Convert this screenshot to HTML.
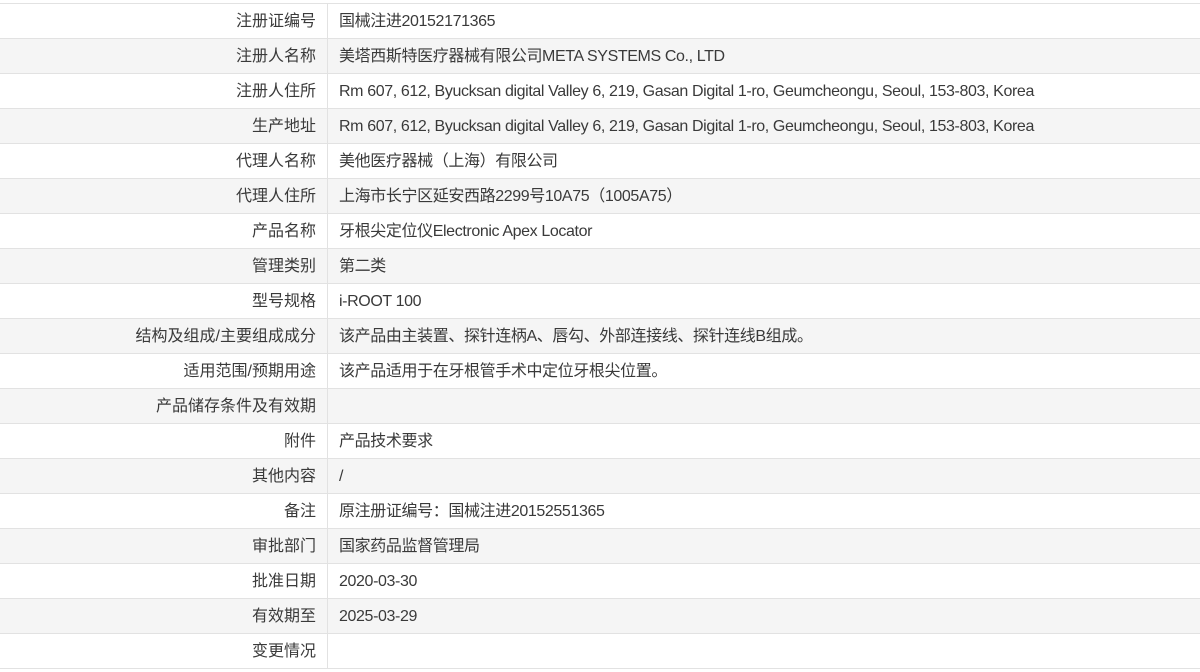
<html><head><style>
body{margin:0;background:#fff;font-family:"Liberation Sans","Noto Sans CJK SC",sans-serif;font-size:14px;color:#3a3a3a}
table{border-collapse:collapse;position:absolute;top:3px;left:-1px;width:1202px}
td{height:34px;box-sizing:border-box;border:1px solid #e2e2e2;padding:1px 0 0 0;line-height:31px}
tr{height:35px}
td.l{width:328px;text-align:right;padding-right:11px}
td.v{padding-left:11px;letter-spacing:-0.38px}
tr:nth-child(even){background:#f5f5f5}
</style></head><body><table>
<tr><td class="l">注册证编号</td><td class="v">国械注进20152171365</td></tr>
<tr><td class="l">注册人名称</td><td class="v">美塔西斯特医疗器械有限公司META SYSTEMS Co., LTD</td></tr>
<tr><td class="l">注册人住所</td><td class="v">Rm 607, 612, Byucksan digital Valley 6, 219, Gasan Digital 1-ro, Geumcheongu, Seoul, 153-803, Korea</td></tr>
<tr><td class="l">生产地址</td><td class="v">Rm 607, 612, Byucksan digital Valley 6, 219, Gasan Digital 1-ro, Geumcheongu, Seoul, 153-803, Korea</td></tr>
<tr><td class="l">代理人名称</td><td class="v">美他医疗器械（上海）有限公司</td></tr>
<tr><td class="l">代理人住所</td><td class="v">上海市长宁区延安西路2299号10A75（1005A75）</td></tr>
<tr><td class="l">产品名称</td><td class="v">牙根尖定位仪Electronic Apex Locator</td></tr>
<tr><td class="l">管理类别</td><td class="v">第二类</td></tr>
<tr><td class="l">型号规格</td><td class="v">i-ROOT 100</td></tr>
<tr><td class="l">结构及组成/主要组成成分</td><td class="v">该产品由主装置、探针连柄A、唇勾、外部连接线、探针连线B组成。</td></tr>
<tr><td class="l">适用范围/预期用途</td><td class="v">该产品适用于在牙根管手术中定位牙根尖位置。</td></tr>
<tr><td class="l">产品储存条件及有效期</td><td class="v"></td></tr>
<tr><td class="l">附件</td><td class="v">产品技术要求</td></tr>
<tr><td class="l">其他内容</td><td class="v">/</td></tr>
<tr><td class="l">备注</td><td class="v">原注册证编号：国械注进20152551365</td></tr>
<tr><td class="l">审批部门</td><td class="v">国家药品监督管理局</td></tr>
<tr><td class="l">批准日期</td><td class="v">2020-03-30</td></tr>
<tr><td class="l">有效期至</td><td class="v">2025-03-29</td></tr>
<tr><td class="l">变更情况</td><td class="v"></td></tr>
</table></body></html>
